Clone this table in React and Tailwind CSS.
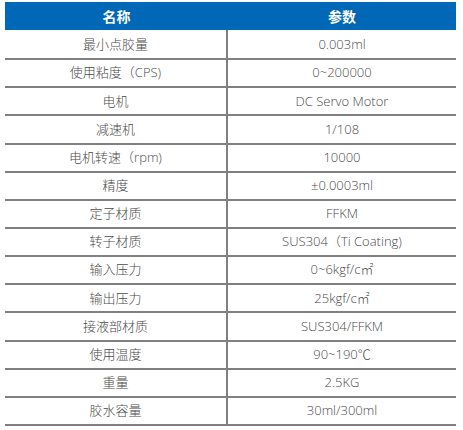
const rows = [
  ["最小点胶量", "0.003ml"],
  ["使用粘度（CPS)", "0~200000"],
  ["电机", "DC Servo Motor"],
  ["减速机", "1/108"],
  ["电机转速（rpm)", "10000"],
  ["精度", "±0.0003ml"],
  ["定子材质", "FFKM"],
  ["转子材质", "SUS304（Ti Coating)"],
  ["输入压力", "0~6kgf/c㎡"],
  ["输出压力", "25kgf/c㎡"],
  ["接液部材质", "SUS304/FFKM"],
  ["使用温度", "90~190℃"],
  ["重量", "2.5KG"],
  ["胶水容量", "30ml/300ml"],
];

export default function App() {
  return (
    <div
      className="w-[463px] h-[430px] bg-white pl-[5px] pt-[2px] overflow-hidden"
      style={{ fontFamily: '"Open Sans", "Noto Sans CJK SC", sans-serif' }}
    >
      <div className="w-[451px]">
        <div className="grid grid-cols-[223px_228px] h-[28px] bg-[#0068b7] text-white text-[14px] font-bold">
          <div className="flex items-center justify-center">名称</div>
          <div className="flex items-center justify-center">参数</div>
        </div>

        {rows.map(([name, value], i) => (
          <div
            key={name}
            className={
              i === 0
                ? "grid grid-cols-[221px_2px_228px] h-[30.15px] pt-[2px] border-b-2 border-[#808080] text-[13px] font-light text-[#4a4a4a]"
                : "grid grid-cols-[221px_2px_228px] h-[28.15px] border-b-2 border-[#808080] text-[13px] font-light text-[#4a4a4a]"
            }
          >
            <div className="flex items-center justify-center">{name}</div>
            <div className={i === 0 ? "bg-[#808080] -mt-[2px]" : "bg-[#808080]"}></div>
            <div className="flex items-center justify-center">{value}</div>
          </div>
        ))}
      </div>
    </div>
  );
}
